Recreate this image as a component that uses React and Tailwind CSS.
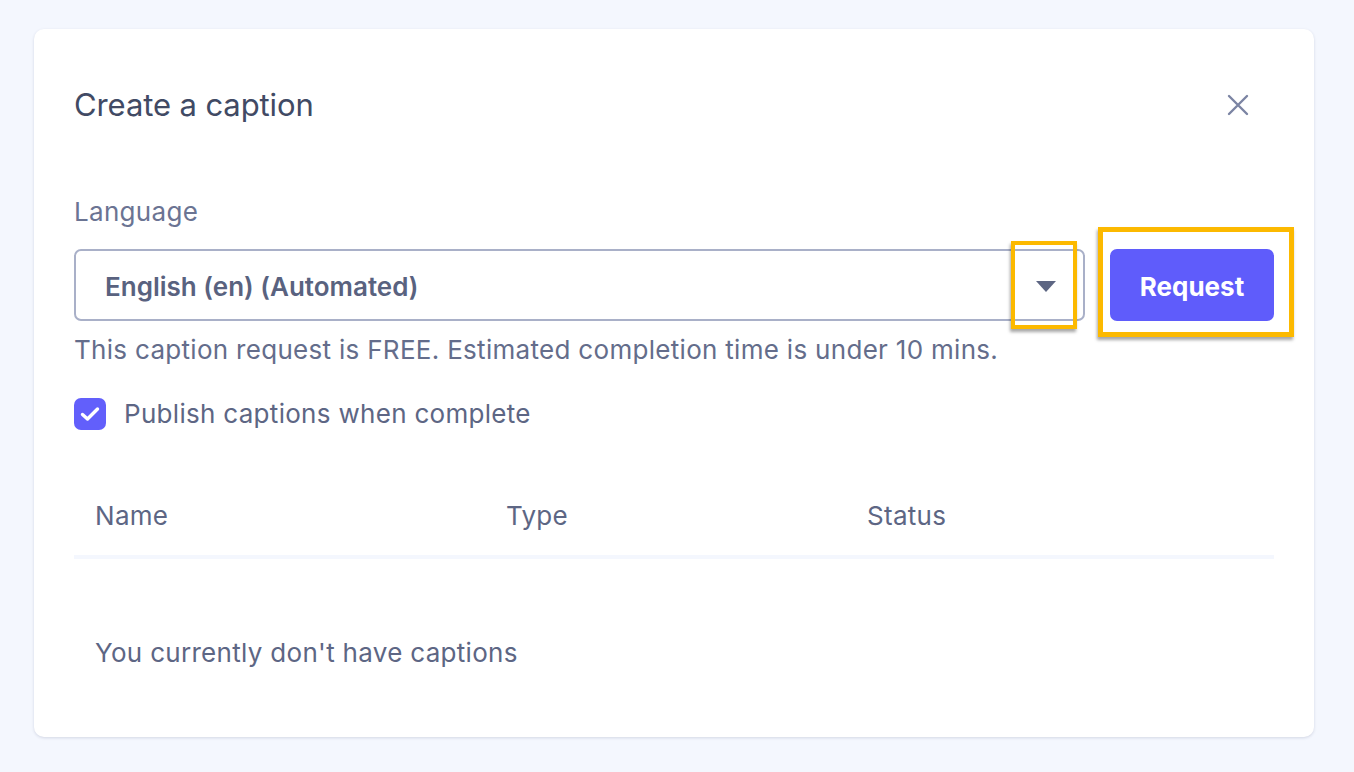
import React, { useState } from 'react'

const font = { fontFamily: 'Inter, "Noto Sans", sans-serif' }

export default function App() {
  const [publish, setPublish] = useState(true)

  return (
    <div className="min-h-screen bg-[#f4f7fe] pt-[29px] pl-[34px]" style={font}>
      {/* Modal card */}
      <div className="w-[1280px] h-[708px] bg-white rounded-[10px] shadow-[0_1px_3px_rgba(60,70,110,0.18)] px-[40px] pt-[55px]">
        {/* Header */}
        <div className="flex items-center justify-between h-[42px]">
          <h2 className="text-[31px] text-[#414a64] tracking-[-0.1px]">Create a caption</h2>
          <button className="mr-[24px] text-[#7b84a3]">
            <svg width="24" height="24" viewBox="0 0 24 24" fill="none" stroke="currentColor" strokeWidth="2.4" strokeLinecap="round">
              <path d="M3 3 L21 21 M21 3 L3 21" />
            </svg>
          </button>
        </div>

        {/* Language */}
        <div className="mt-[69px] text-[26px] tracking-[0.3px] text-[#6b7493] leading-[34px]">Language</div>

        <div className="mt-[20px] flex gap-[25px]">
          <div className="relative w-[1011px] h-[72px] border-2 border-[#a9b0c8] rounded-[7px] flex items-center justify-between pl-[29px] pr-[27px] pt-[3px]">
            <span className="text-[26px] font-semibold text-[#59627f]">English (en) (Automated)</span>
            <svg width="20" height="11" viewBox="0 0 20 11">
              <path d="M0 0 H20 L10 11 Z" fill="#5d6683" />
            </svg>
            {/* annotation */}
            <div className="absolute right-[6px] top-[-10px] bottom-[-10px] w-[66px] border-4 border-[#fcb900] shadow-[-1px_3px_3px_rgba(0,0,0,0.35)]" />
          </div>

          <div className="relative">
            <button className="w-[164px] h-[72px] bg-[#5f5cfb] rounded-[7px] text-white text-[26px] font-bold pt-[3px]">Request</button>
            {/* annotation */}
            <div className="absolute left-[-12px] right-[-20px] top-[-22px] bottom-[-16px] border-[5px] border-[#fcb900] shadow-[-1px_3px_3px_rgba(0,0,0,0.35)]" />
          </div>
        </div>

        <p className="mt-[12px] text-[26px] tracking-[0.3px] text-[#646d8b] leading-[34px]">
          This caption request is FREE. Estimated completion time is under 10 mins.
        </p>

        {/* Checkbox */}
        <label className="mt-[27px] flex items-center gap-[18px] cursor-pointer">
          <span
            onClick={() => setPublish(!publish)}
            className="w-[32px] h-[32px] rounded-[7px] bg-[#625ffb] flex items-center justify-center"
          >
            {publish && (
              <svg width="20" height="16" viewBox="0 0 20 16" fill="none" stroke="white" strokeWidth="3.4" strokeLinecap="round" strokeLinejoin="round">
                <path d="M2.5 8.5 L7.5 13 L17.5 3" />
              </svg>
            )}
          </span>
          <span className="text-[26px] tracking-[0.3px] text-[#5d6684]">Publish captions when complete</span>
        </label>

        {/* Table */}
        <div className="mt-[66px] grid grid-cols-[411px_361px_1fr] px-[21px] text-[26px] tracking-[0.3px] text-[#5d6684] leading-[34px]">
          <div>Name</div>
          <div>Type</div>
          <div>Status</div>
        </div>
        <div className="mt-[22px] h-[4px] bg-[#f4f7fe]" />

        <div className="mt-[77px] px-[21px] text-[26px] tracking-[0.3px] text-[#5d6684] leading-[34px]">
          You currently don't have captions
        </div>
      </div>
    </div>
  )
}
